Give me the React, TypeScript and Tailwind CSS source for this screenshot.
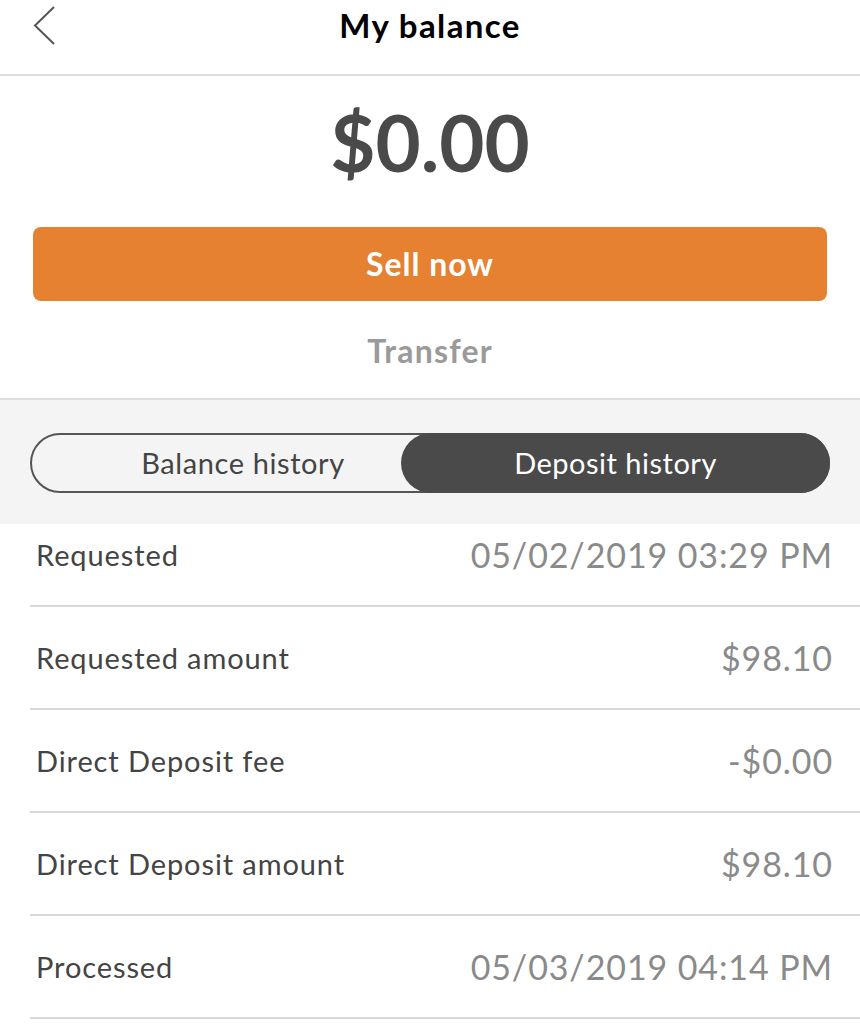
import React from 'react';

const rows = [
  { label: 'Requested', value: '05/02/2019 03:29 PM' },
  { label: 'Requested amount', value: '$98.10' },
  { label: 'Direct Deposit fee', value: '-$0.00' },
  { label: 'Direct Deposit amount', value: '$98.10' },
  { label: 'Processed', value: '05/03/2019 04:14 PM' },
];

export default function App() {
  return (
    <div className="w-[860px] h-[1024px] overflow-hidden bg-white font-['Lato',sans-serif]">
      {/* Header */}
      <div className="relative h-[76px] border-b-2 border-[#dedede]">
        <svg
          className="absolute left-[32px] top-[5px]"
          width="26"
          height="42"
          viewBox="0 0 26 42"
          fill="none"
          stroke="#555"
          strokeWidth="2"
        >
          <path d="M22 2 L3 20.5 L22 39" />
        </svg>
        <h1 className="pt-[5px] text-center text-[33px] font-bold leading-[40px] tracking-[1.4px] text-black">My balance</h1>
      </div>

      {/* Balance */}
      <div className="flex flex-col items-center border-b-2 border-[#dedede] pb-[25px]">
        <div className="mt-[18px] text-[78px] font-bold leading-[96px] text-[#4a4a4a]">$0.00</div>
        <button className="mt-[37px] h-[74px] w-[794px] rounded-[8px] bg-[#e58130] text-[32px] font-bold tracking-[1px] text-white">
          Sell now
        </button>
        <div className="mt-[28px] text-[32px] font-bold leading-[44px] tracking-[1.2px] text-[#9a9a9a]">Transfer</div>
      </div>

      {/* Tabs */}
      <div className="bg-[#f4f4f4] px-[30px] pt-[33px] pb-[31px]">
        <div className="flex h-[60px] rounded-full border-2 border-[#555]">
          <div className="flex w-[422px] flex-none items-center justify-center text-[29px] tracking-[0.6px] text-[#444]">
            Balance history
          </div>
          <div className="-my-[2px] -mr-[2px] -ml-[53px] flex flex-1 items-center justify-center rounded-full bg-[#4a4a4a] text-[29px] tracking-[0.5px] text-white">
            Deposit history
          </div>
        </div>
      </div>

      {/* Rows */}
      <div className="pl-[30px]">
        {rows.map((r, i) => (
          <div
            key={r.label}
            className={`flex items-center justify-between border-b-2 border-[#d8d8d8] pl-[6px] pr-[27px] ${
              i === 0 ? 'h-[83px] pb-[20px]' : 'h-[103px]'
            }`}
          >
            <span className="text-[29px] tracking-[0.9px] text-[#444]">{r.label}</span>
            <span className="text-[34px] tracking-[0.9px] text-[#8a8a8a]">{r.value}</span>
          </div>
        ))}
      </div>
    </div>
  );
}
